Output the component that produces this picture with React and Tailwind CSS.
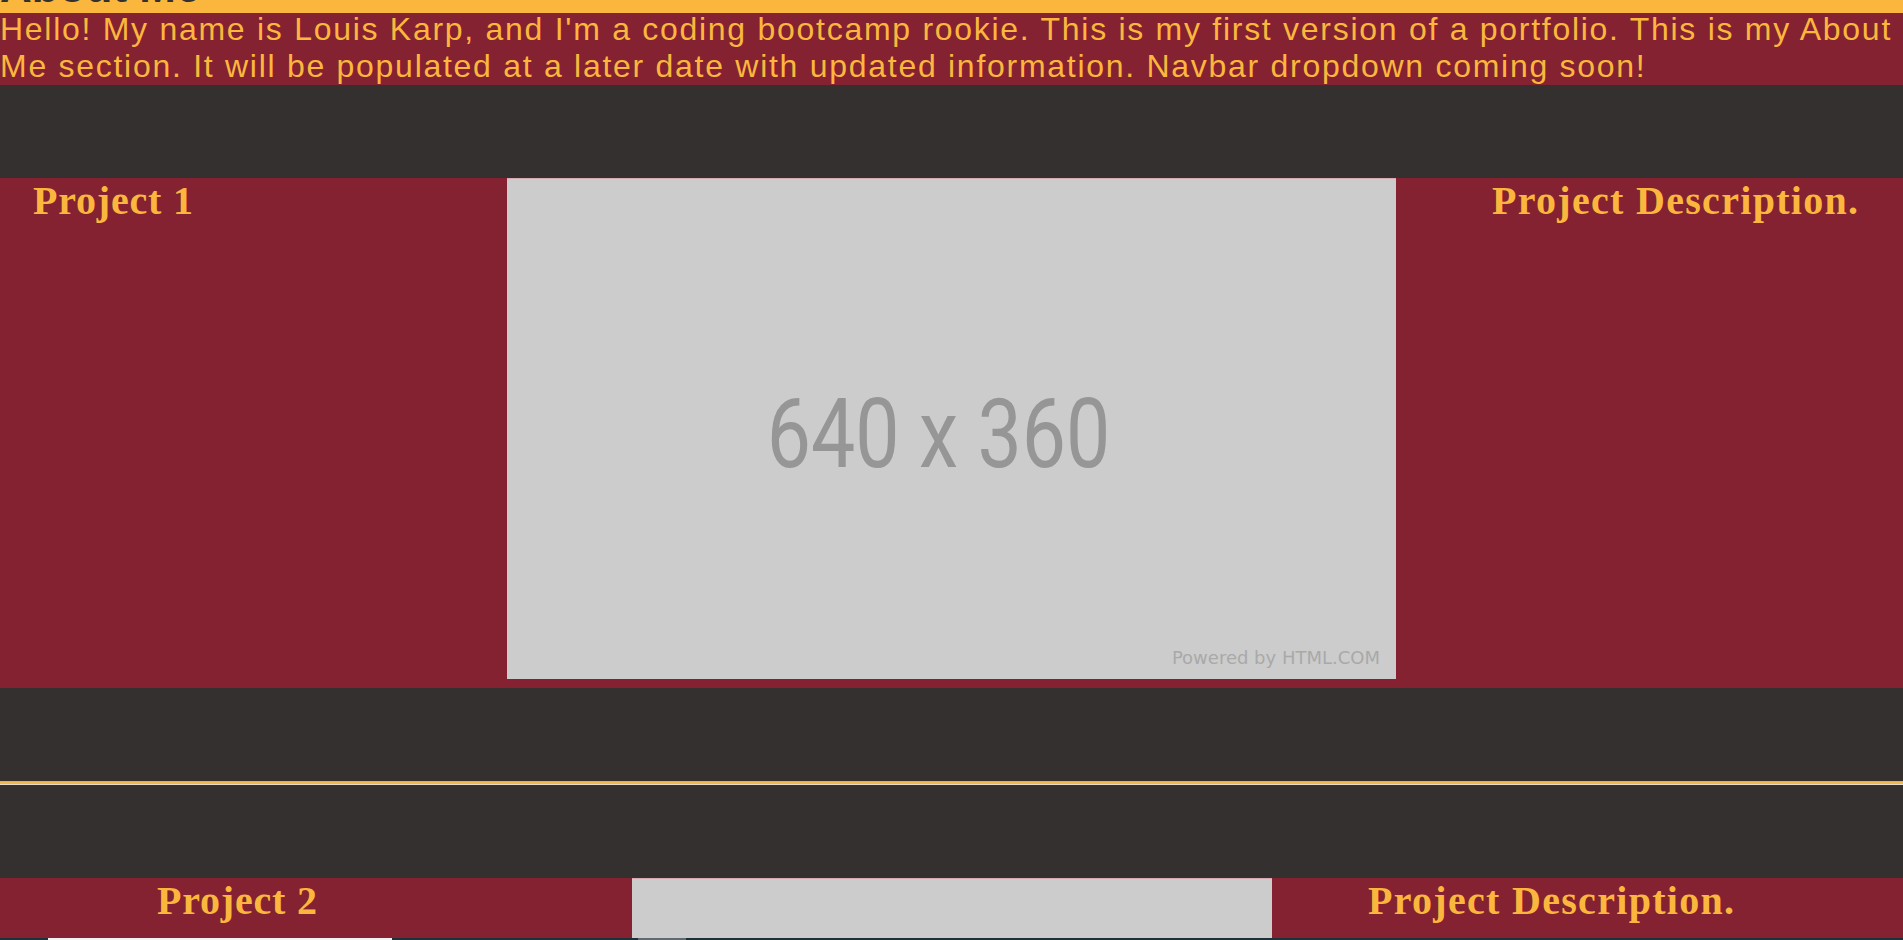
import React from "react";

const projects = [
  {
    name: "Project 1",
    cols: "grid-cols-[507px_889px_1fr]",
    titlePad: "pl-[33px]",
    big: true,
  },
  {
    name: "Project 2",
    cols: "grid-cols-[632px_640px_1fr]",
    titlePad: "pl-[157px]",
    big: false,
  },
];

function Placeholder({ big }) {
  if (!big) {
    return (
      <div className="border-t border-[#d8aab1] bg-[#cccccc] h-[60px]"></div>
    );
  }
  return (
    <div className="pb-[9px]">
      <div className="border-t border-[#d8aab1] bg-[#cccccc] h-[501px] flex flex-col">
        <div className="flex-1 flex items-center justify-center pr-[26px] pt-[42px]">
          <span className="font-['Roboto',sans-serif] text-[96px] leading-none text-[#969696] scale-x-[0.82]">
            640 x 360
          </span>
        </div>
        <div className="flex justify-end pr-[16px] pb-[10px]">
          <span className="font-['DejaVu_Sans',sans-serif] text-[18px] leading-[22px] text-[#a9a9a9]">
            Powered by HTML.COM
          </span>
        </div>
      </div>
    </div>
  );
}

export default function App() {
  return (
    <div className="min-h-screen bg-[#343030] overflow-hidden">
      {/* about me header, scrolled so only the bottom of the heading shows */}
      <div className="h-[13px] overflow-hidden bg-[#fbb73d]">
        <h2 className="mt-[-35px] font-['Liberation_Sans',Arial,sans-serif] font-bold text-[44px] leading-[44px] text-[#343030]">
          About Me
        </h2>
      </div>
      <div className="flow-root bg-[#852232]">
        <p className="mt-[-2px] font-['Liberation_Sans',Arial,sans-serif] text-[32px] leading-[36.8px] tracking-[1.72px] text-[#fbb73d]">
          Hello! My name is Louis Karp, and I'm a coding bootcamp rookie. This is my first version of a portfolio. This is my About Me section. It will be populated at a later date with updated information. Navbar dropdown coming soon!
        </p>
      </div>

      <div className="h-[93px]"></div>

      {projects.map((p, i) => (
        <React.Fragment key={p.name}>
          <section className={`grid ${p.cols} bg-[#852232]`}>
            <h2 className={`${p.titlePad} font-['Liberation_Serif',serif] font-bold text-[40px] leading-[46px] tracking-[0.8px] text-[#fbb73d]`}>
              {p.name}
            </h2>
            <Placeholder big={p.big} />
            <h2 className="pl-[96px] font-['Liberation_Serif',serif] font-bold text-[40px] leading-[46px] tracking-[1.3px] text-[#fbb73d]">
              Project Description.
            </h2>
          </section>
          {i === 0 && (
            <div className="py-[93px]">
              <hr className="h-[4px] border-0 border-t border-b border-t-[#c8b386] border-b-[#e6dccb] bg-[#f0b94c]" />
            </div>
          )}
        </React.Fragment>
      ))}

      <div className="flex h-[2px] bg-[#1d3139]">
        <div className="ml-[48px] w-[344px] bg-[#f2f2f2]"></div>
        <div className="ml-[246px] w-[48px] bg-[#5f6b70]"></div>
      </div>
    </div>
  );
}
